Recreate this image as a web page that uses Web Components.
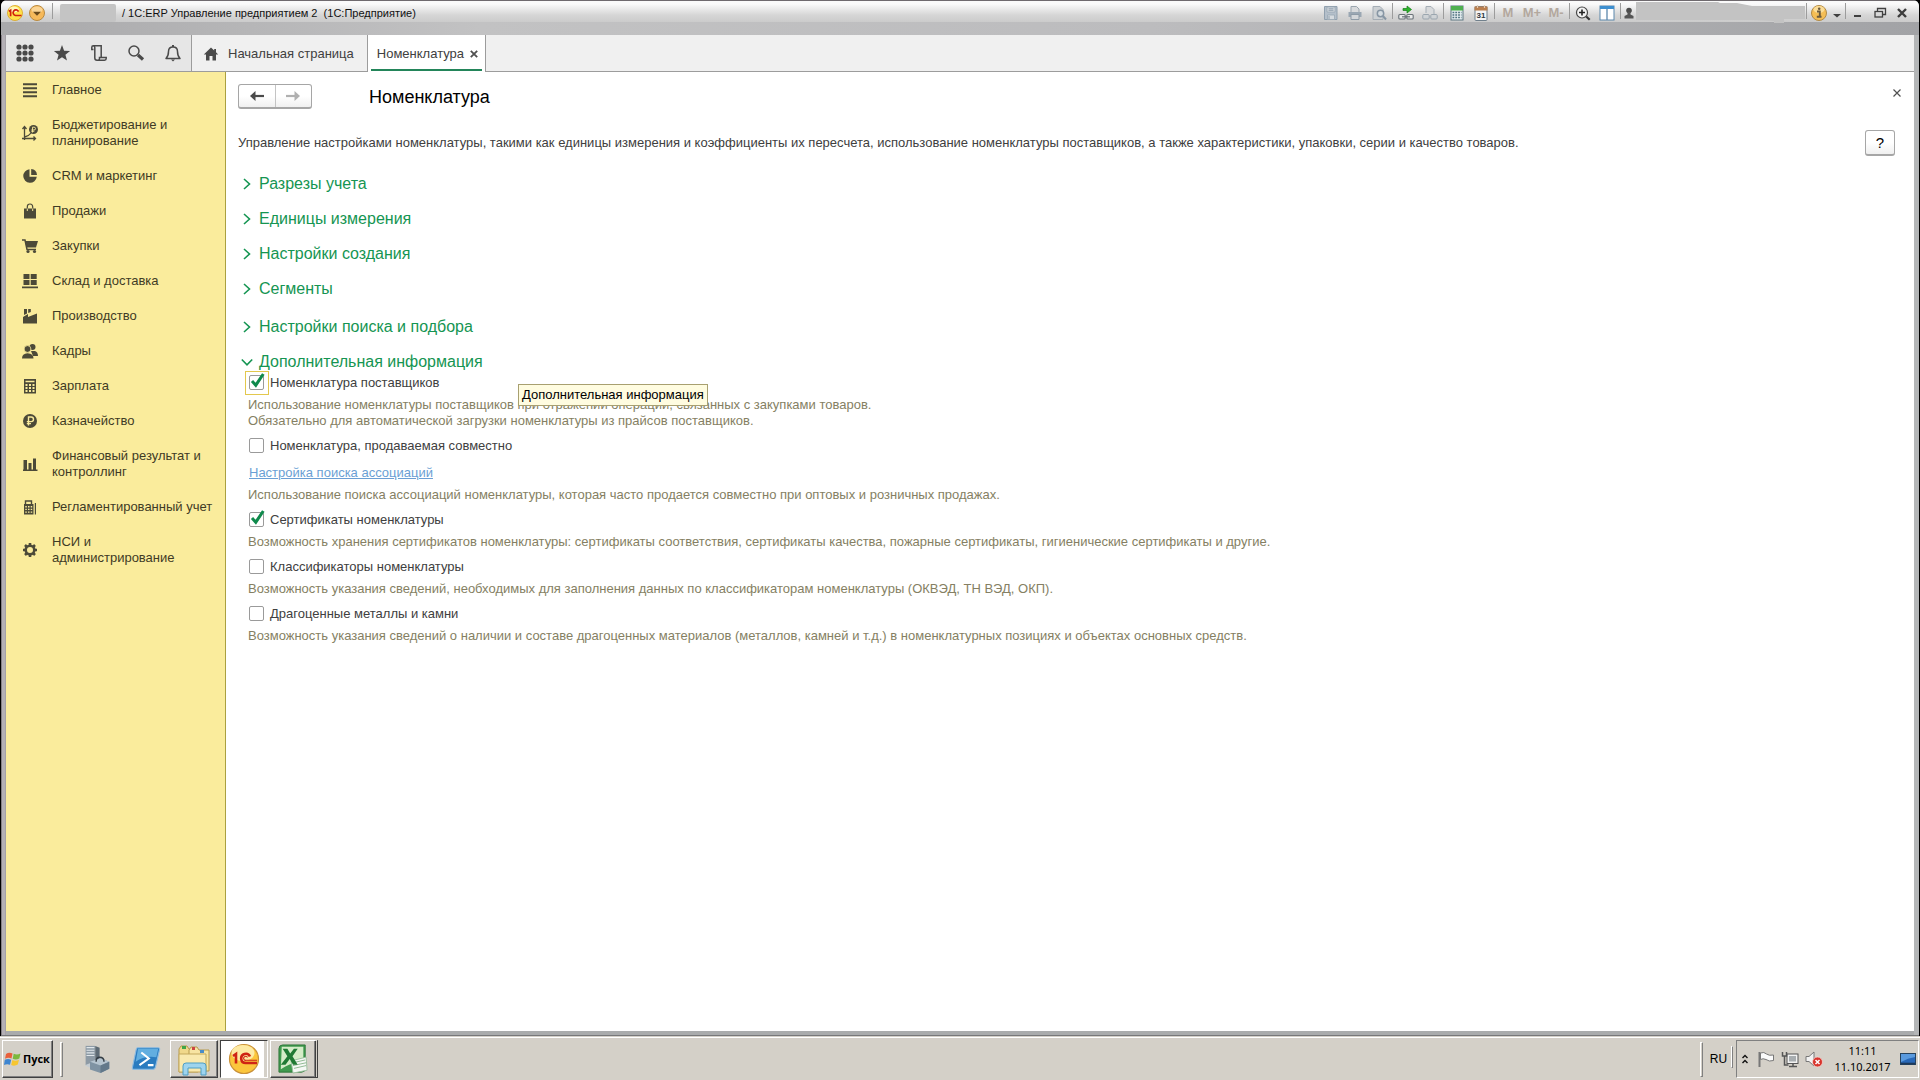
<!DOCTYPE html>
<html lang="ru">
<head>
<meta charset="utf-8">
<title>Номенклатура — 1С:ERP Управление предприятием 2</title>
<style>
html,body{margin:0;height:100%}
body{font-family:"Liberation Sans",Arial,sans-serif;font-size:13px;line-height:16px;color:#404040;background:#000;overflow:hidden}
</style>
</head>
<body>
<erp-desktop></erp-desktop>
<script>
const BASE = `*{box-sizing:border-box}button{font:inherit;color:inherit;background:none;border:0;padding:0;margin:0}[hidden]{display:none}`;

const ICONS = {
  grid: [18,18,`<g fill="#4a4a4a">${[3,9,15].map(y=>[3,9,15].map(x=>`<circle cx="${x}" cy="${y}" r="2.6"/>`).join('')).join('')}</g>`],
  star: [18,18,`<path fill="#4a4a4a" d="M9 1l2.1 5.700 6 .2-4.700 3.800 1.600 5.900L9 13.200 4 16.600l1.600-5.900L.9 6.900l6-.2z"/>`],
  scroll: [18,18,`<g fill="none" stroke="#4a4a4a" stroke-width="1.500"><path d="M3.500 5.500H1.800V3.300Q1.800 1.800 3.300 1.800H11.200V13.500"/><path d="M3.300 1.800Q4.800 1.800 4.800 3.500V14Q4.800 16.200 7 16.200H14.500Q16.200 16.200 16.200 14.500V13.500H9.500V14.500Q9.500 16.200 8 16.200"/></g>`],
  search: [18,18,`<circle cx="7" cy="7" r="5" fill="none" stroke="#4a4a4a" stroke-width="1.500"/><path d="M11 11l5 4.500" stroke="#4a4a4a" stroke-width="3.200"/>`],
  bell: [18,18,`<path d="M2 14.500Q4.500 12 4.500 7.500Q4.500 3 9 3Q13.500 3 13.500 7.500Q13.500 12 16 14.500Z" fill="none" stroke="#4a4a4a" stroke-width="1.500" stroke-linejoin="round"/><path d="M9 1v2" stroke="#4a4a4a" stroke-width="2"/><path d="M7 15.500h4L9 17.500z" fill="#4a4a4a"/>`],
  home: [16,16,`<path d="M8 1.500L.8 8.500H3V14.500H6.500V10H9.500V14.500H13V8.500H15.200L13 6.300V3H11.200V4.500Z" fill="#4a4a4a"/>`],
  menu: [16,16,`<path d="M1 2.200h14M1 6.200h14M1 10.200h14M1 14.200h14" stroke="#4c4a38" stroke-width="1.900"/>`],
  plan: [18,18,`<g fill="none" stroke="#4c4a38" stroke-width="1.300"><path d="M3.500 16V3M1.500 5l2-2.500L5.500 5M1 14.500H14.500M12.500 12.500l2 2-2 2M3.500 13Q8 12 10 9"/></g><circle cx="12.500" cy="5.500" r="4.500" fill="#4c4a38"/><path d="M11.500 8.500V3.200h1.600a1.400 1.400 0 0 1 0 2.800h-2.800M10.300 7.300h3" fill="none" stroke="#faec9c" stroke-width=".9"/>`],
  pie: [16,16,`<path d="M7.500 1.200A6.800 6.800 0 1 0 14.800 8.800H7.500Z" fill="#4c4a38"/><path d="M9.200 1A6.500 6.500 0 0 1 15 7H9.200Z" fill="#4c4a38"/>`],
  bag: [16,16,`<path d="M2 5.500H14V15.500H2Z" fill="#4c4a38"/><path d="M5.300 7.500V4Q5.300 1 8 1Q10.700 1 10.700 4V7.500" fill="none" stroke="#4c4a38" stroke-width="1.200"/><path d="M5.300 8V5.500M10.700 8V5.500" stroke="#faec9c" stroke-width="1"/>`],
  cart: [18,16,`<path d="M1 2H4L6 11.500H15" fill="none" stroke="#4c4a38" stroke-width="1.500"/><path d="M4 3H17L15 9.500H5.500Z" fill="#4c4a38"/><circle cx="7" cy="13.500" r="1.600" fill="#4c4a38"/><circle cx="13.500" cy="13.500" r="1.600" fill="#4c4a38"/>`],
  store: [16,16,`<path d="M1.500 1h6v5h-6zM8.700 1h6v5h-6zM1.500 7h6v5h-6zM8.700 7h6v5h-6zM0 13.500h16v1.800H0z" fill="#4c4a38"/>`],
  factory: [16,16,`<path d="M1 15.500V9L6 6V9L15 5.500V15.500Z" fill="#4c4a38"/><path d="M2 1h3v4.500L2 7zM6.200 1h2.600v3L6.200 5z" fill="#4c4a38"/>`],
  people: [18,16,`<g fill="#4c4a38"><circle cx="11.500" cy="4" r="3"/><path d="M10 8h4Q17 9 17 13H12z"/><circle cx="6.500" cy="6" r="3.400" stroke="#faec9c" stroke-width=".8"/><path d="M1 15.500Q1 10.500 6.500 10.200Q12.500 10.500 12.500 15.500Z"/></g>`],
  calc: [16,16,`<path d="M2 1h12v14.500H2z" fill="#4c4a38"/><path d="M3.500 2.800h9v1.500h-9zM3.500 6h2v2h-2zM7 6h2v2H7zM10.500 6h2v2h-2zM3.500 9h2v2h-2zM7 9h2v2H7zM10.500 9h2v2h-2zM3.500 12h2v2h-2zM7 12h2v2H7zM10.500 12h2v2h-2z" fill="#faec9c"/>`],
  rouble: [16,16,`<circle cx="8" cy="8" r="7" fill="#4c4a38"/><path d="M6.500 12.500V4h2.700a2.300 2.300 0 0 1 0 4.600H4.800M4.800 10.600H9" fill="none" stroke="#faec9c" stroke-width="1.400"/>`],
  chart: [16,16,`<path d="M1.500 4H5V14H1.500zM6.500 7H9.500V14H6.500zM11 2.500H14V14H11zM1 13.500H15.500V15H1z" fill="#4c4a38"/>`],
  report: [16,16,`<path d="M3.500 5.500V2H9.500V5.500" fill="none" stroke="#4c4a38" stroke-width="1.400"/><path d="M2 5h9.500v10.500H2zM12.800 4H14v11.500h-1.200z" fill="#4c4a38"/><path d="M3.300 7h1.500v1.400H3.300zM6 7h1.500v1.400H6zM8.700 7h1.500v1.400H8.700zM3.300 9.700h1.500v1.400H3.300zM6 9.700h1.500v1.400H6zM8.700 9.700h1.500v1.400H8.700zM3.300 12.400h1.500v1.400H3.300zM6 12.400h1.500v1.400H6zM8.700 12.400h1.500v1.400H8.700z" fill="#faec9c"/>`],
  gear: [16,16,`<g stroke="#4c4a38" fill="none"><circle cx="8" cy="8" r="4.300" stroke-width="2.600"/><path d="M8 1v2.500M8 12.500V15M1 8h2.500M12.500 8H15M3 3l1.800 1.800M11.200 11.200L13 13M13 3l-1.800 1.800M4.800 11.200L3 13" stroke-width="2.600"/></g>`],
  back: [16,12,`<path d="M15 6H5" stroke="#4a4a4a" stroke-width="2.200"/><path d="M1 6L6.500 1V11Z" fill="#4a4a4a"/>`],
  forward: [16,12,`<path d="M1 6H11" stroke="#b0b0b0" stroke-width="2.200"/><path d="M15 6L9.500 1V11Z" fill="#b0b0b0"/>`],
  right: [12,12,`<path d="M3 1L8.500 6L3 11" fill="none" stroke="#159552" stroke-width="1.600"/>`],
  down: [12,12,`<path d="M.8 3.500L6 8.800L11.200 3.500" fill="none" stroke="#159552" stroke-width="1.600"/>`],
  close: [10,10,`<path d="M1.500 1.500L8.500 8.500M8.500 1.500L1.500 8.500" stroke="#505050" stroke-width="1.200"/>`],
  closeBold: [10,10,`<path d="M1.800 1.800L8.200 8.200M8.200 1.800L1.800 8.200" stroke="#505050" stroke-width="1.800"/>`],
  tick: [16,16,`<path d="M3 6L6.800 10.200L14.300 -1" fill="none" stroke="#0f8a4c" stroke-width="3"/>`],
  logo: [16,16,`<circle cx="8" cy="8" r="7.500" fill="#ffe14a" stroke="#d9a21c" stroke-width=".8"/><ellipse cx="7" cy="4.500" rx="5" ry="3" fill="#fff8b8"/><path d="M1.800 6.300L3.600 5.200V11.200M11.500 6.600A2.800 2.800 0 1 0 8.500 10.500H14.500" fill="none" stroke="#d0200e" stroke-width="1.700"/>`],
  arrowOrb: [16,16,`<circle cx="8" cy="8" r="7.500" fill="#f6b95a" stroke="#b98a40"/><ellipse cx="8" cy="4.800" rx="5.500" ry="3.400" fill="#fbd594"/><path d="M4 6.800H12L8 10.800Z" fill="#6a4a1c"/>`],
  save: [16,16,`<path d="M1.500 1.500h12.500v13H1.500z" fill="#b4bfca" stroke="#91a0ae"/><path d="M4 2h8v5H4zM4.500 10h7v4.500h-7z" fill="#d6dbdf" stroke="#9aa8b4" stroke-width=".8"/><path d="M5.500 3.800h5M5.500 5.300h5M6 11v3" stroke="#91a0ae"/>`],
  print: [16,16,`<path d="M4 7V1.500H9.500L12 4V7" fill="#d8dadc" stroke="#9aa5ae"/><path d="M1.500 7H14.500V12H1.500Z" fill="#9aa7b3"/><path d="M4 9.500H12V14.500H4Z" fill="#d4d7da" stroke="#8e9ba7"/>`],
  preview: [16,16,`<path d="M2 1.500H9L12 4.500V14.500H2Z" fill="#cdd1d4" stroke="#a4adb5"/><circle cx="9.500" cy="8.500" r="3.200" fill="#d5dce1" stroke="#8796a4" stroke-width="1.500"/><path d="M12 11l3 3.500" stroke="#8796a4" stroke-width="2"/>`],
  link: [16,16,`<path d="M5 3.500H9V1L13.500 4.500L9 8V5.500H5Z" fill="#2cb52a" stroke="#187d1a" stroke-width=".7"/><g fill="#e9eaea" stroke="#6a7278" stroke-width="1.100"><rect x=".8" y="9.500" width="6.400" height="4.500" rx="1"/><rect x="8.800" y="9.500" width="6.400" height="4.500" rx="1"/></g><path d="M4 11.800H12" stroke="#6a7278" stroke-width="1.200"/>`],
  linkOff: [16,16,`<path d="M4 8V1.500H9L12 4.500V9" fill="#d8dadc" stroke="#a4adb5"/><g fill="#cfd3d6" stroke="#9aa5ae"><rect x=".8" y="9.500" width="6.400" height="4.500" rx="1"/><rect x="8.800" y="9.500" width="6.400" height="4.500" rx="1"/></g>`],
  table: [16,16,`<rect x="2" y="1" width="12" height="14" fill="#e6eef0" stroke="#5d7682"/><path d="M2 1h12v4.500H2z" fill="#4fb04f"/><path d="M3.500 7.500h9M3.500 10h9M3.500 12.500h9" stroke="#4f7380" stroke-width="1.300" stroke-dasharray="1.800 1"/>`],
  calendar: [16,16,`<rect x="2" y="1.500" width="12" height="14" rx="1" fill="#f4f4f4" stroke="#71808c"/><path d="M1.500 1.500h13v4h-13z" fill="#bb7f4e"/><path d="M4.500 0v3M11.500 0v3" stroke="#e6cdb4" stroke-width="1.200"/><text x="8" y="13" font-size="8" text-anchor="middle" fill="#303840" font-family="Liberation Sans">31</text>`],
  zoomIn: [16,16,`<circle cx="7" cy="7.500" r="5.500" fill="#f3f3f3" stroke="#484848" stroke-width="1.200"/><path d="M4 7.500h6M7 4.500v6" stroke="#222" stroke-width="1.600"/><path d="M11.200 11.500l3.500 3.200" stroke="#333" stroke-width="2.200"/>`],
  panels: [16,16,`<rect x="1" y="1" width="14" height="14" fill="#fff" stroke="#5b87ac"/><path d="M1 1h14v3H1z" fill="#3d8fd0"/><path d="M8 4v11" stroke="#5b87ac" stroke-width="1.300"/>`],
  user: [10,12,`<circle cx="5" cy="3.500" r="2.800" fill="#4c4c4c"/><path d="M3.500 5h3v2.500L9.500 9v2.500H.5V9l3-1.500z" fill="#555"/>`],
  info: [18,18,`<circle cx="9" cy="9" r="7.500" fill="#f5be55" stroke="#b18a45"/><ellipse cx="9" cy="5.500" rx="5.500" ry="3.500" fill="#fbdd98"/><path d="M7 7.500H9.800V12.500M6.800 12.700H11.500" fill="none" stroke="#6b5a3c" stroke-width="1.900"/><circle cx="9.200" cy="4.700" r="1.300" fill="#6b5a3c"/>`],
  drop: [10,16,`<path d="M1 9h8L5 12.500z" fill="#404040"/>`],
  min: [12,12,`<path d="M2 9h7" stroke="#404040" stroke-width="2"/>`],
  restore: [12,12,`<path d="M3.500 4V1.500h8v6H9" fill="none" stroke="#404040" stroke-width="1.300"/><rect x="1" y="4.500" width="7.500" height="5.500" fill="none" stroke="#404040" stroke-width="1.300"/>`],
  winClose: [12,12,`<path d="M2 2L10 10M10 2L2 10" stroke="#3c3c3c" stroke-width="2.400"/>`],
  flag4: [18,18,`<path d="M2 4Q5 2 8.500 3.500L7.500 8.500Q4.500 7 1 8.700Z" fill="#e8603c"/><path d="M9.700 3.800Q13 5.300 16.500 3.500L15.300 8.500Q12 10.200 8.700 8.800Z" fill="#7cb83e"/><path d="M.8 9.800Q4 8.300 7.200 9.700L6 14.800Q3 13.500 0 15Z" fill="#3f86d0"/><path d="M8.400 10.100Q11.500 11.500 15 9.800L13.800 14.500Q10.500 16.500 7.200 15Z" fill="#f7c62f"/>`],
  server: [32,32,`<path d="M3 1H14V23H3Z" fill="#8d9aa5"/><path d="M14 1L19 3V21H14Z" fill="#5d6a74"/><path d="M4 3h9M4 6h9M4 9h9M4 12h9" stroke="#e0e6ea" stroke-width="1.400"/><path d="M2 23l8-3 6 3-6 4z" fill="#c4ccd2"/><path d="M8 19L20 15L30 19V27L20 32L8 28Z" fill="#7f93a3"/><path d="M8 19L20 15L30 19L20 23.500Z" fill="#b5c4cf"/><path d="M20 23.500V32L30 27V19Z" fill="#62788a"/><path d="M15 19Q15 14 19 14Q24 14 24 19" fill="none" stroke="#333c44" stroke-width="1.600"/>`],
  shell: [32,32,`<path d="M7 4H29Q31 4 30.500 6L26 25Q25.500 27 23.500 27H3Q1 27 1.500 25L5.500 6Q6 4 7 4Z" fill="#2a7cc0" stroke="#8dbbe0" stroke-width="1.200"/><path d="M7.500 5H29L27 14Q14 12 5 19Z" fill="#62aee0"/><path d="M11 9L19 15.500L9 22.500M18 22.500H24" fill="none" stroke="#fff" stroke-width="2.200"/>`],
  folders: [32,32,`<path d="M1 6L3 3H9L11 6H20V29H1Z" fill="#f0d88a" stroke="#b79a4c"/><path d="M11 7L13 4H19L21 7H31V28H11Z" fill="#f7e4a2" stroke="#b79a4c"/><path d="M1 11H28V29H1Z" fill="#f9e9ae" stroke="#c4a95c"/><path d="M4 3h4v3H4z" fill="#3fa648"/><path d="M14 4h3v3h-3z" fill="#c44"/><path d="M22 7h4v3h-4z" fill="#4a8dc8"/><path d="M5 32V23Q5 20 8 20H25Q28 20 28 23V32H23V25H10V32Z" fill="#9ed4ee" stroke="#4f9ec4"/>`],
  bigLogo: [32,32,`<circle cx="16" cy="16" r="14.500" fill="#fbc63c" stroke="#c9913a" stroke-width="1.200"/><ellipse cx="15" cy="10" rx="11.500" ry="8" fill="#fdeaa4"/><path d="M5 13L8 11V20.500M22 13.500A4.600 4.600 0 1 0 18 20H29" fill="none" stroke="#cf2414" stroke-width="2.600"/><path d="M19.500 14.500A2 2 0 1 0 18 17.300H29" fill="none" stroke="#cf2414" stroke-width="1.100"/>`],
  sheet: [32,32,`<path d="M5 1H29V26Q29 30 25 30H1V5Q1 1 5 1Z" fill="#3f9a4e" stroke="#2c7438"/><path d="M4 3H27V22Q18 17 3 27Z" fill="#d5ecc8"/><path d="M14 18L30 14L31 28L16 31Z" fill="#f5f8f5" stroke="#9cbf9f"/><path d="M16 20l13-3M16 23l14-3M17 26l13-3" stroke="#8cb68f"/><path d="M5 5H10L13 10L17 5H21L15.500 13L21 22H16L12.500 16L8 22H3L10 13Z" fill="#207a34"/>`],
  chev: [8,14,`<path d="M1.500 6L4 3.500L6.500 6M1.500 11L4 8.500L6.500 11" fill="none" stroke="#111" stroke-width="1.400"/>`],
  flag: [18,18,`<path d="M2.500 2V17" stroke="#777" stroke-width="2"/><path d="M3.500 3Q7 1.500 9.500 4Q12 6 16.500 5V10.500Q12 12 9 9.500Q6 8 3.500 9.500Z" fill="#fafafa" stroke="#777"/>`],
  net: [18,18,`<rect x="6" y="4" width="11" height="9.500" fill="#f2f2f2" stroke="#555"/><rect x="8" y="6" width="7" height="5.500" fill="#a8adb0"/><path d="M8 16.500h8M12 13.500v3" stroke="#555" stroke-width="1.500"/><path d="M1.500 2v4h4V2M3.500 6v9h4" fill="none" stroke="#555" stroke-width="1.500"/>`],
  mute: [18,18,`<path d="M1 6.500H4L9 2V16L4 11.500H1Z" fill="#f2f2f2" stroke="#777"/><circle cx="12.500" cy="12" r="5" fill="#d8342c" stroke="#f4d4d0" stroke-width=".8"/><path d="M10.500 10l4 4M14.500 10l-4 4" stroke="#fff" stroke-width="1.500"/>`],
  desk: [16,14,`<rect x=".5" y="1.500" width="15" height="11" fill="#2868b8" stroke="#26425e"/><path d="M1 2H15V5Q8 6 1 10Z" fill="#5a9ade"/><path d="M1 11.500h14" stroke="#1d3a5c" stroke-width="1.600"/>`]
};

function define(name, css, html, after) {
  const t = document.createElement('template');
  t.innerHTML = `<style>${BASE}${css}</style>${html}`;
  customElements.define(name, class extends HTMLElement {
    connectedCallback() {
      if (this.shadowRoot) return;
      this.attachShadow({mode:'open'}).append(t.content.cloneNode(true));
      if (after) after(this, this.shadowRoot);
    }
  });
}

define('ui-icon', `:host{display:inline-flex;flex:none}svg{display:block;overflow:visible}`, ``, (h, r) => {
  const [w, ht, body] = ICONS[h.getAttribute('name')];
  const s = h.hasAttribute('size') ? +h.getAttribute('size') : w;
  const d = document.createElement('div');
  d.innerHTML = `<svg width="${s}" height="${ht * s / w}" viewBox="0 0 ${w} ${ht}" aria-hidden="true">${body}</svg>`;
  r.append(d.firstChild);
});

/* Window caption */
define('tool-button', `:host{display:flex;width:24px;flex:none}button{flex:1;display:flex;align-items:center;justify-content:center;color:#b3a89e;font-weight:bold;font-size:13px}`,
  `<button type="button"><slot></slot></button>`, (h, r) => { if (h.hasAttribute('label')) r.querySelector('button').setAttribute('aria-label', h.getAttribute('label')); });
define('tool-sep', `:host{display:flex;width:3px;height:16px;align-self:flex-start;flex:none;justify-content:center}i{width:1px;background:#9c9c9c}`, `<i></i>`);

define('title-bar', `
:host{display:flex;height:35px;flex:none;align-items:flex-start;background:linear-gradient(#6f6a6e 0 1px,#fafafa 1px 4px,#d6d6d6 15px,#cbcbcb 22px,transparent 22px),linear-gradient(90deg,#a9a9ab,#c2c2c3 25%,#bcbcbe 60%,#a2a3a6);border-radius:6px 6px 0 0;padding:3px 6px 0}
.left,.right{display:flex;align-items:center;height:20px}
.right{margin-left:auto}
.left{gap:6px}
.title{font-size:11px;color:#111;white-space:pre}
.mask{width:56px;height:18px;background:#c4c4c4;border-radius:2px}
.win{width:22px}.user,.drop{width:14px}
.right svg{flex:none}
`, `
<div class="left"><ui-icon name="logo"></ui-icon><ui-icon name="arrowOrb"></ui-icon><tool-sep></tool-sep><div class="mask"></div>
<span class="title">/ 1С:ERP Управление предприятием 2&nbsp; (1С:Предприятие)</span></div>
<div class="right">
<tool-button label="Сохранить"><ui-icon name="save"></ui-icon></tool-button><tool-button label="Печать"><ui-icon name="print"></ui-icon></tool-button><tool-button label="Просмотр"><ui-icon name="preview"></ui-icon></tool-button><tool-sep></tool-sep>
<tool-button label="Получить ссылку"><ui-icon name="link"></ui-icon></tool-button><tool-button label="Перейти по ссылке"><ui-icon name="linkOff"></ui-icon></tool-button><tool-sep></tool-sep>
<tool-button label="Калькулятор"><ui-icon name="table"></ui-icon></tool-button><tool-button label="Календарь"><ui-icon name="calendar"></ui-icon></tool-button><tool-sep></tool-sep>
<tool-button>M</tool-button><tool-button>M+</tool-button><tool-button>M-</tool-button><tool-sep></tool-sep>
<tool-button label="Масштаб"><ui-icon name="zoomIn"></ui-icon></tool-button><tool-button label="Панели"><ui-icon name="panels"></ui-icon></tool-button><tool-sep></tool-sep>
<tool-button class="user" label="Пользователь"><ui-icon name="user"></ui-icon></tool-button>
<svg width="169" height="22" viewBox="0 0 169 22" aria-hidden="true"><path d="M0 0H82L84 1H101L116 4H169V17H148V21H138V19L115 18H0Z" fill="#c3c3c3"/></svg><tool-sep></tool-sep>
<tool-button class="win" label="Информация"><ui-icon name="info"></ui-icon></tool-button><tool-button class="drop" label="Меню"><ui-icon name="drop"></ui-icon></tool-button><tool-sep></tool-sep>
<tool-button class="win" label="Свернуть"><ui-icon name="min"></ui-icon></tool-button><tool-button class="win" label="Восстановить"><ui-icon name="restore"></ui-icon></tool-button><tool-button class="win" label="Закрыть"><ui-icon name="winClose"></ui-icon></tool-button>
</div>`);

/* Toolbar with open pages */
define('page-tabs', `
:host{display:flex;height:37px;flex:none;background:#f0f0f0;border-bottom:1px solid #9c9c9c}
.tools{display:flex;width:186px;background:#e6e6e6;border-right:1px solid #9c9c9c;align-items:center}
.tools button{width:37px;height:36px;display:flex;align-items:center;justify-content:center}
.tab{display:flex;align-items:center;border-right:1px solid #9c9c9c;gap:9px;padding:1px 13px 0 11px}
.active{background:#fff;padding:0 3px;height:37px}
.active span{display:flex;align-items:center;gap:5px;height:34px;padding:3px 3px 0 6px;border-bottom:2px solid #23855a}
`, `
<div class="tools"><button type="button" aria-label="Меню функций"><ui-icon name="grid"></ui-icon></button><button type="button" aria-label="Избранное"><ui-icon name="star"></ui-icon></button><button type="button" aria-label="История"><ui-icon name="scroll"></ui-icon></button><button type="button" aria-label="Поиск"><ui-icon name="search"></ui-icon></button><button type="button" aria-label="Оповещения"><ui-icon name="bell"></ui-icon></button></div>
<button type="button" class="tab"><ui-icon name="home"></ui-icon>Начальная страница</button>
<button type="button" class="tab active"><span>Номенклатура <ui-icon name="closeBold"></ui-icon></span></button>`);

/* Section panel */
define('nav-item', `
:host{display:block}
button{display:flex;width:100%;align-items:center;text-align:left;gap:13px;color:#3f3b25}
i{width:18px;display:flex;justify-content:center;flex:none}
`, `<button type="button"><i></i><span><slot></slot></span></button>`, (h, r) => {
  const ic = document.createElement('ui-icon'); ic.setAttribute('name', h.getAttribute('icon')); r.querySelector('i').append(ic);
});
define('section-panel', `
:host{display:block;width:220px;flex:none;background:#faec9c;border-right:1px solid #aaa040}
nav{display:flex;flex-direction:column;gap:19px;padding:10px 6px 0 15px}
`, `<nav>
<nav-item icon="menu">Главное</nav-item>
<nav-item icon="plan">Бюджетирование и<br>планирование</nav-item>
<nav-item icon="pie">CRM и маркетинг</nav-item>
<nav-item icon="bag">Продажи</nav-item>
<nav-item icon="cart">Закупки</nav-item>
<nav-item icon="store">Склад и доставка</nav-item>
<nav-item icon="factory">Производство</nav-item>
<nav-item icon="people">Кадры</nav-item>
<nav-item icon="calc">Зарплата</nav-item>
<nav-item icon="rouble">Казначейство</nav-item>
<nav-item icon="chart">Финансовый результат и<br>контроллинг</nav-item>
<nav-item icon="report">Регламентированный учет</nav-item>
<nav-item icon="gear">НСИ и<br>администрирование</nav-item>
</nav>`);

/* Collapsible settings group */
define('fold-group', `
:host{display:block}
button{display:flex;align-items:center;gap:6px;height:20px;font-size:16px;line-height:20px;color:#159552}
.mark{display:flex}
.body{padding:3px 0 0 7px}
`, `<button type="button" aria-expanded="false"><i class="mark"></i><span></span></button><div class="body" hidden><slot></slot></div>`, (h, r) => {
  const b = r.querySelector('button'), body = r.querySelector('.body'), mark = r.querySelector('.mark');
  r.querySelector('span').textContent = h.getAttribute('caption');
  const show = open => {
    const ic = document.createElement('ui-icon');
    ic.setAttribute('name', open ? 'down' : 'right');
    mark.replaceChildren(ic);
    b.setAttribute('aria-expanded', open);
    body.hidden = !open;
  };
  b.addEventListener('click', () => { h.toggleAttribute('open'); show(h.hasAttribute('open')); });
  show(h.hasAttribute('open'));
});

define('check-field', `
:host{display:flex;height:16px;align-items:center}
label{display:flex;align-items:center;gap:5px;color:#404040}
.box{display:grid;width:16px;height:16px;margin-left:1px}
:host([current]) .box{outline:1px solid #e3c84e;outline-offset:3px}
input{grid-area:1/1;appearance:none;margin:0;width:15px;height:15px;border:1px solid #9a9a9a;border-radius:2px;background:#fff}
ui-icon{grid-area:1/1;display:none;pointer-events:none}
input:checked + ui-icon{display:block}
`, `<label><span class="box"><input type="checkbox"><ui-icon name="tick"></ui-icon></span><slot></slot></label>`, (h, r) => {
  r.querySelector('input').checked = h.hasAttribute('checked');
});
define('hint-text', `:host{display:block;color:#857f63;margin:6px 0 9px}`, `<slot></slot>`);

define('settings-page', `
:host{display:block;flex:1;min-width:0;background:#fff;padding:12px 19px 0 12px}
header{display:flex;align-items:center;height:24px}
.history{display:flex;width:74px;height:25px;border:1px solid #a6a6a6;border-bottom-width:2px;border-radius:3px;background:linear-gradient(#fff 50%,#f0f0f0)}
.history button{flex:1;display:flex;align-items:center;justify-content:center}
.history button+button{border-left:1px solid #c4c4c4}
h1{font-size:18px;line-height:24px;font-weight:normal;color:#000;margin:2px 0 0 57px}
.close{margin-left:auto;width:16px;height:18px;align-self:flex-start;display:flex;align-items:center;justify-content:center;margin-right:-10px}
.intro{display:flex;align-items:center;justify-content:space-between;height:26px;margin-top:22px;color:#404040}
.help{width:30px;height:26px;border:1px solid #a6a6a6;border-bottom-width:2px;border-radius:3px;background:linear-gradient(#fff 50%,#f0f0f0);color:#000;font-size:15px}
.groups{display:flex;flex-direction:column;gap:15px;padding:18px 0 0 3px}
.late{margin-top:3px}
.open{position:relative}
a{display:table;color:#6b9fd4;margin:11px 0 0 1px}
.tip{position:absolute;left:277px;top:32px;height:22px;padding:2px 3px;border:1px solid #a8a070;background:#fffce0;color:#000;white-space:nowrap}
`, `
<header><div class="history"><button type="button" aria-label="Назад"><ui-icon name="back"></ui-icon></button><button type="button" aria-label="Вперед"><ui-icon name="forward"></ui-icon></button></div><h1>Номенклатура</h1><button type="button" class="close" aria-label="Закрыть"><ui-icon name="close"></ui-icon></button></header>
<div class="intro"><span>Управление настройками номенклатуры, такими как единицы измерения и коэффициенты их пересчета, использование номенклатуры поставщиков, а также характеристики, упаковки, серии и качество товаров.</span><button type="button" class="help">?</button></div>
<div class="groups">
<fold-group caption="Разрезы учета"></fold-group>
<fold-group caption="Единицы измерения"></fold-group>
<fold-group caption="Настройки создания"></fold-group>
<fold-group caption="Сегменты"></fold-group>
<fold-group class="late" caption="Настройки поиска и подбора"></fold-group>
<fold-group class="open" caption="Дополнительная информация" open>
<check-field checked current>Номенклатура поставщиков</check-field>
<hint-text>Использование номенклатуры поставщиков при отражении операций, связанных с закупками товаров.<br>Обязательно для автоматической загрузки номенклатуры из прайсов поставщиков.</hint-text>
<check-field>Номенклатура, продаваемая совместно</check-field>
<a href="#">Настройка поиска ассоциаций</a>
<hint-text>Использование поиска ассоциаций номенклатуры, которая часто продается совместно при оптовых и розничных продажах.</hint-text>
<check-field checked>Сертификаты номенклатуры</check-field>
<hint-text>Возможность хранения сертификатов номенклатуры: сертификаты соответствия, сертификаты качества, пожарные сертификаты, гигиенические сертификаты и другие.</hint-text>
<check-field>Классификаторы номенклатуры</check-field>
<hint-text>Возможность указания сведений, необходимых для заполнения данных по классификаторам номенклатуры (ОКВЭД, ТН ВЭД, ОКП).</hint-text>
<check-field>Драгоценные металлы и камни</check-field>
<hint-text>Возможность указания сведений о наличии и составе драгоценных материалов (металлов, камней и т.д.) в номенклатурных позициях и объектах основных средств.</hint-text>
<div class="tip" role="tooltip">Дополнительная информация</div>
</fold-group>
</div>`);

/* Taskbar */
define('task-bar', `
:host{display:flex;flex:none;height:44px;background:#d4d0c8;border-top:1px solid #d4d0c8;box-shadow:inset 0 1px #fff;padding:3px 1px 2px 2px;align-items:stretch;color:#000}
.raised{border:1px solid;border-color:#fff #404040 #404040 #fff;box-shadow:inset -1px -1px #808080}
.start{display:flex;align-items:center;gap:1px;width:51px;padding-left:1px;font:bold 11px/16px "Open Sans","Noto Sans",sans-serif}
.grip{width:3px;margin:2px 0 1px;border:1px solid;border-color:#fff #808080 #808080 #fff}
.task{display:flex;align-items:center;justify-content:center;width:49px}
.task.raised,.on{width:48px;margin-right:2px}
.stack{border-right:3px double #404040}
.on{background:#fff;border:1px solid;border-color:#404040 #fff #fff #404040;box-shadow:inset -3px 0 #d4d0c8}
.left{display:flex}
.left .grip{margin-left:7px;margin-right:9px}
.right{margin-left:auto;display:flex}
.lang{width:28px;display:flex;align-items:center;justify-content:center;font-size:12px;padding-left:3px}
.right .thin{width:2px;margin:6px 3px 10px 0}
.tray{display:flex;align-items:center;width:183px;border:1px solid;border-color:#808080 #fff #fff #808080;padding:0 2px 0 4px}
.tray .gap{display:flex;gap:6px;margin-left:8px}
time{flex:1;text-align:center;font:11px/16px "Noto Sans",sans-serif;padding-left:2px}
`, `
<div class="left"><button type="button" class="start raised"><ui-icon name="flag4" size="18"></ui-icon>Пуск</button><div class="grip"></div>
<button type="button" class="task" aria-label="Диспетчер сервера"><ui-icon name="server" size="28"></ui-icon></button>
<button type="button" class="task" aria-label="PowerShell"><ui-icon name="shell" size="30"></ui-icon></button>
<button type="button" class="task raised" aria-label="Проводник"><ui-icon name="folders"></ui-icon></button>
<button type="button" class="task on" aria-label="1С:Предприятие"><ui-icon name="bigLogo"></ui-icon></button>
<button type="button" class="task raised stack" aria-label="Excel"><ui-icon name="sheet" size="30"></ui-icon></button></div>
<div class="right"><div class="grip"></div><div class="lang">RU</div><div class="grip thin"></div>
<div class="tray"><ui-icon name="chev"></ui-icon><div class="gap"><ui-icon name="flag"></ui-icon><ui-icon name="net"></ui-icon><ui-icon name="mute"></ui-icon></div><time>11:11<br>11.10.2017</time><ui-icon name="desk"></ui-icon></div></div>`);

define('erp-desktop', `
:host{display:flex;flex-direction:column;height:100vh}
main{flex:1;min-height:0;display:flex;flex-direction:column;margin:0 1px;background:#a9a9ab;border-radius:6px 6px 0 0}
.frame{flex:1;min-height:0;display:flex;flex-direction:column;padding:0 5px 4px;border-bottom:1px solid #77787a;background:linear-gradient(90deg,#858085 0 1px,#b4b0b5 1px 4px,#a4a1a6 4px 5px,#a9abac 5px calc(100% - 5px),#b4b6b7 calc(100% - 5px))}
.work{flex:1;min-height:0;display:flex}
`, `<main><title-bar></title-bar><div class="frame"><page-tabs></page-tabs><div class="work"><section-panel></section-panel><settings-page></settings-page></div></div></main><task-bar></task-bar>`);
</script>
</body>
</html>
